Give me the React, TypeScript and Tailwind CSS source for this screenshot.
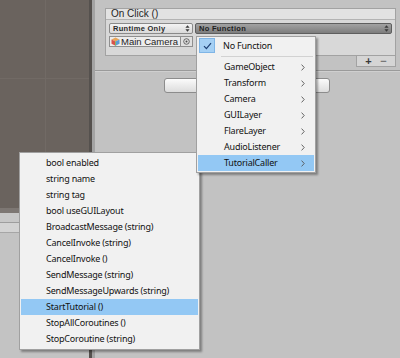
import React from "react";

const UpDown = () => (
  <svg width="5" height="7" viewBox="0 0 5 7" className="shrink-0">
    <path d="M2.5 0.3L4.6 2.8H0.4z M2.5 6.7L0.4 4.2H4.6z" fill="#3a3a3a" />
  </svg>
);

const Chevron = () => (
  <svg width="4" height="7" viewBox="0 0 4 7" className="shrink-0">
    <path d="M0.6 0.6L3.2 3.5L0.6 6.4" fill="none" stroke="#555" strokeWidth="0.9" />
  </svg>
);

const CubeIcon = () => (
  <svg width="9" height="9" viewBox="0 0 9 9" className="shrink-0">
    <path d="M4.5 0.5L8.5 2.5L4.5 4.5L0.5 2.5z" fill="#e8a65a" />
    <path d="M0.5 2.5L4.5 4.5V8.7L0.5 6.7z" fill="#d9534a" />
    <path d="M8.5 2.5L4.5 4.5V8.7L8.5 6.7z" fill="#5c9bd6" />
    <path d="M4.5 4.5V8.7" stroke="#7cbf5a" strokeWidth="0.8" />
  </svg>
);

const PickerIcon = () => (
  <svg width="7" height="7" viewBox="0 0 7 7">
    <circle cx="3.5" cy="3.5" r="2.8" fill="none" stroke="#4a4a4a" strokeWidth="0.8" />
    <circle cx="3.5" cy="3.5" r="1" fill="#4a4a4a" />
  </svg>
);

const functionItems = ["GameObject", "Transform", "Camera", "GUILayer", "FlareLayer", "AudioListener", "TutorialCaller"];

const methodItems = [
  "bool enabled",
  "string name",
  "string tag",
  "bool useGUILayout",
  "BroadcastMessage (string)",
  "CancelInvoke (string)",
  "CancelInvoke ()",
  "SendMessage (string)",
  "SendMessageUpwards (string)",
  "StartTutorial ()",
  "StopAllCoroutines ()",
  "StopCoroutine (string)",
];

export default function App() {
  return (
    <div className="relative flex h-[358px] w-[400px] overflow-hidden bg-[#c2c2c2] font-['Liberation_Sans',Arial,sans-serif] text-[#1e1e1e]">
      {/* scene view + lower toolbar */}
      <div className="flex w-[89px] flex-col">
        <div className="relative h-[208px] bg-[#6a635e]">
          <div className="absolute left-0 right-0 top-[78px] h-px bg-[#716a65]" />
          <div className="absolute bottom-0 left-[45px] top-0 w-px bg-[#716a65]" />
        </div>
        <div className="h-[5px] bg-[#7d7773]" />
        <div className="h-[10px] border-b border-[#9e9e9e] bg-[#c8c8c8]" />
        <div className="h-[10px] border-b border-[#a6a6a6] bg-[#d3d3d3]" />
        <div className="flex-1 bg-[#c3c3c3]" />
      </div>
      <div className="w-[3px] bg-[#55514e]" />
      <div className="w-[3px] bg-[#a3a3a3]" />

      {/* inspector */}
      <div className="flex flex-1 flex-col">
        <div className="pl-[10px] pr-[4px] pt-[8px]">
          <div className="border border-[#a2a2a2] bg-[#d8d8d8]">
            <div className="flex h-[11px] items-center border-b border-[#b3b3b3] bg-[#e2e2e2] px-[5px] text-[10px] leading-none">
              On Click ()
            </div>
            <div className="flex h-[35px] flex-col gap-[2px] px-[3px] pt-[3px]">
              <div className="flex gap-[2px]">
                <div className="flex h-[11px] w-[84px] items-center justify-between rounded-[2px] border border-[#8a8a8a] bg-gradient-to-b from-[#f4f4f4] to-[#d9d9d9] pl-[3px] pr-[2px]">
                  <span className="text-[7.5px] font-bold leading-none tracking-[0.3px] text-[#2a2a2a]">Runtime Only</span>
                  <UpDown />
                </div>
                <div className="flex h-[11px] flex-1 items-center justify-between rounded-[2px] border border-[#5e5e5e] bg-gradient-to-b from-[#a2a2a2] to-[#7d7d7d] pl-[3px] pr-[2px]">
                  <span className="text-[7.5px] font-bold leading-none tracking-[0.3px] text-[#1f1f1f]">No Function</span>
                  <UpDown />
                </div>
              </div>
              <div className="flex h-[11px] w-[84px]">
                <div className="flex flex-1 items-center gap-[1px] border border-[#8f8f8f] bg-[#ededed] pl-[1px]">
                  <CubeIcon />
                  <span className="text-[9.5px] leading-none">Main Camera</span>
                </div>
                <div className="flex w-[12px] items-center justify-center border border-l-0 border-[#8f8f8f] bg-[#e0e0e0]">
                  <PickerIcon />
                </div>
              </div>
            </div>
          </div>
          <div className="flex justify-end">
            <div className="flex h-[11px] w-[40px] items-center justify-around border border-t-0 border-[#a2a2a2] bg-[#d5d5d5] px-[4px] text-[11px] font-bold leading-none text-[#3a3a3a]">
              <span>+</span>
              <span className="text-[#777]">−</span>
            </div>
          </div>
        </div>
        <div className="mt-[3px] h-px bg-[#9a9a9a]" />
        <div className="h-px bg-[#cfcfcf]" />
        <div className="ml-[69px] mt-[6px] h-[15px] w-[166px] rounded-[3px] border border-[#8c8c8c] bg-gradient-to-b from-[#fbfbfb] to-[#dcdcdc]" />
      </div>

      {/* method submenu */}
      <div className="absolute left-[19px] top-[152px] w-[181px] border border-[#a0a0a0] bg-[#f1f1f1] py-[2px] font-['Noto_Sans',sans-serif] shadow-[2px_2px_2px_rgba(0,0,0,0.35)]">
        {methodItems.map((m) => (
          <div
            key={m}
            className={`mx-[1px] h-[16px] pl-[25px] text-[9px] leading-[16px] tracking-[-0.2px] text-[#111] ${m === "StartTutorial ()" ? "bg-[#93c8f4]" : ""}`}
          >
            {m}
          </div>
        ))}
      </div>

      {/* function menu */}
      <div className="absolute left-[196px] top-[36px] w-[120px] border border-[#a0a0a0] bg-[#f1f1f1] py-[1px] font-['Noto_Sans',sans-serif] shadow-[2px_2px_2px_rgba(0,0,0,0.35)]">
        <div className="flex h-[15px] items-center">
          <div className="ml-[2px] flex h-[15px] w-[16px] items-center justify-center border border-[#7fb5e6] bg-[#a5d0f4]">
            <svg width="9" height="8" viewBox="0 0 9 8">
              <path d="M1 4.2L3.4 6.6L8 1.2" fill="none" stroke="#1d3f73" strokeWidth="1.2" />
            </svg>
          </div>
          <span className="ml-[8px] text-[9px] tracking-[-0.2px] text-[#111]">No Function</span>
        </div>
        <div className="flex h-[6px] items-center pl-[24px] pr-[2px]">
          <div className="h-px flex-1 bg-[#d2d2d2]" />
        </div>
        {functionItems.map((f) => (
          <div
            key={f}
            className={`mx-[1px] flex h-[16px] items-center justify-between pl-[26px] pr-[9px] text-[9px] tracking-[-0.2px] text-[#111] ${f === "TutorialCaller" ? "bg-[#93c8f4]" : ""}`}
          >
            <span>{f}</span>
            <Chevron />
          </div>
        ))}
      </div>
    </div>
  );
}
